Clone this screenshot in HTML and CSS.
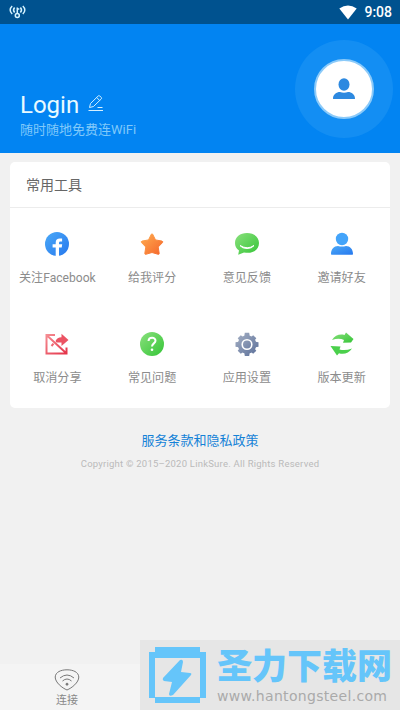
FILE: index.html
```html
<!DOCTYPE html>
<html lang="zh">
<head>
<meta charset="utf-8">
<title>WiFi</title>
<link rel="stylesheet" href="styles.css">
</head>
<body>
<div class="screen">
  <div class="status">
    <svg class="hotspot" width="17" height="14" viewBox="0 0 17 14" fill="none" stroke="#d5f3ff" stroke-width="1.500"><path d="M3.200 1C.5 3.500.5 6.500 3.200 9M5.600 2.500C4.300 4 4.300 6 5.600 7.500M13.800 1c2.700 2.500 2.700 5.500 0 8M11.400 2.500c1.300 1.500 1.300 3.500 0 5M8.300 2.500v6M8.300 4h2"/><circle cx="8.300" cy="10.500" r="2"/></svg>
    <svg class="signal" width="18" height="15" viewBox="0 0 18 15"><path d="M.3 3.600Q9-2.800 17.700 3.600L9 14.400Z" fill="#fff"/></svg>
    <span class="time">9:08</span>
  </div>
  <header class="hero">
    <div class="who">
      <div class="name"><span>Login</span>
        <svg width="16" height="17" viewBox="0 0 16 17" fill="none" stroke="#d5f0ff" stroke-width="1"><path d="M1.500 12.500l1-4L10.300.900q.7-.6 1.400 0l1.600 1.600q.6.700 0 1.400L5.500 11.500zM8.700 2.500l3 3M9.500 12.500h5M.5 15.500h14.500"/></svg>
      </div>
      <div class="tag">随时随地免费连WiFi</div>
    </div>
    <div class="halo"><div class="avatar">
      <svg width="24" height="22" viewBox="0 0 24 22" fill="#2d89e0"><ellipse cx="12" cy="6.500" rx="5.500" ry="6.200"/><path d="M1 20.500c0-4 3.500-6.500 7-6.500q4 1.300 8 0c3.500 0 7 2.500 7 6.500q0 .5-.6.500H1.600q-.6 0-.6-.5z"/></svg>
    </div></div>
  </header>
  <main class="card">
    <h2>常用工具</h2>
    <div class="grid">
      <div class="item"><svg viewBox="0 0 24 24"><defs><linearGradient id="b" x2="1" y2="1"><stop stop-color="#4ba9f7"/><stop offset="1" stop-color="#2678ee"/></linearGradient><linearGradient id="o" x2="1" y2="1"><stop stop-color="#ffae50"/><stop offset="1" stop-color="#f5652b"/></linearGradient><linearGradient id="g" x2="1" y2="1"><stop stop-color="#8ae07d"/><stop offset="1" stop-color="#35c537"/></linearGradient><linearGradient id="r" x2="1" y2="1"><stop stop-color="#f58c92"/><stop offset="1" stop-color="#e43349"/></linearGradient><linearGradient id="s" x2="1" y2="1"><stop stop-color="#a5b0c4"/><stop offset="1" stop-color="#5b6f99"/></linearGradient></defs><circle cx="12" cy="12" r="12" fill="url(#b)"/><path d="M10.700 24v-8.500H7.600v-3.200h3.100v-1.600c0-2.900 1.500-4.200 4.100-4.200h2.300v2.900h-1.600c-1.100 0-1.500.6-1.500 1.600v1.300h3.200l-.5 3.200H14V24z" fill="#fff"/></svg><span>关注Facebook</span></div>
      <div class="item"><svg viewBox="0 0 24 24"><path d="M12 1.800q.5 0 .8.700l2.700 5.400 6.500 1.200q1.300.5.500 1.500L18.200 15l1 6.500q0 1-1 .8L12 20.500l-6.200 1.800q-1 .2-1-.8l1-6.500-4.300-4.400q-.8-1 .5-1.500l6.500-1.200 2.700-5.400q.3-.7.8-.7z" fill="url(#o)" stroke="url(#o)" stroke-linejoin="round"/></svg><span>给我评分</span></div>
      <div class="item"><svg viewBox="0 0 24 24"><path d="M12 1c7 0 12 4 12 10s-5 9.800-11 9.800c-1.500 0-2.500 0-4-.3L3.200 22.700l.8-4.200C1.300 16.700 0 14 0 11 0 5 5 1 12 1z" fill="url(#g)"/><path d="M5 13.500q7.500 4.500 14 0-2 3-7 3t-7-3z" fill="#fff" stroke="#fff" stroke-linejoin="round"/></svg><span>意见反馈</span></div>
      <div class="item"><svg viewBox="0 0 24 24"><ellipse cx="12" cy="7" rx="6.200" ry="6.200" fill="#43a4fa"/><path d="M1 22c0-5 3-8 7-8q4 1.200 8 0c4 0 7 3 7 8q0 .7-.7.700H1.700Q1 22.700 1 22z" fill="url(#b)"/></svg><span>邀请好友</span></div>
      <div class="item"><svg viewBox="0 0 24 24"><path d="M10 3H1.500v18.500h20V15.500M2 3.500l19 17.500M6.500 14l2-2.300" fill="none" stroke="url(#r)" stroke-width="2"/><path d="M10.500 9q1.500-3.500 6-3.800V1.800L23.500 8l-7 6v-3.500q-3-.2-5 0z" fill="#eb5363"/></svg><span>取消分享</span></div>
      <div class="item"><svg viewBox="0 0 24 24"><circle cx="12" cy="12" r="12" fill="url(#g)"/><path d="M8.500 9c.2-4.300 7-4.300 7-.3 0 2.600-3.500 2.800-3.500 5.800" fill="none" stroke="#fff" stroke-width="2"/><circle cx="12" cy="17.700" r="1.300" fill="#fff"/></svg><span>常见问题</span></div>
      <div class="item"><svg viewBox="0 0 24 24"><g fill="url(#s)"><circle cx="12" cy="12.500" r="9.300"/><path d="M9.800.8h4.400l.8 5H9zM9.800 24h4.400l.8-5H9zM.5 10.300v4.400l5 .8v-6zM23.500 10.300v4.400l-5 .8v-6zM2.700 6.300l3.100-3.100 4 3-4.100 4.100zM21.300 18.700l-3.100 3.100-4-3 4.100-4.100zM18.200 3.200l3.100 3.100-3 4-4.100-4.100zM5.800 21.800l-3.100-3.100 3-4 4.100 4.100z"/></g><circle cx="12" cy="12.500" r="4.800" fill="none" stroke="#fff" stroke-width="1.600"/></svg><span>应用设置</span></div>
      <div class="item"><svg viewBox="0 0 24 24"><path d="M2 8C5 3 10 1.700 14.500 3L16 .5 23.500 7 21 10.500l-8 .2 1-2.700Q9 5.500 2 8z" fill="url(#g)"/><path d="M22 16.500c-3 4.500-8 6.300-13 4.700l-2 2.300L.5 14l10 .5-1 3q6 1.500 12.500-1z" fill="#4bd04c"/></svg><span>版本更新</span></div>
    </div>
  </main>
  <div class="terms">服务条款和隐私政策</div>
  <div class="copy">Copyright © 2015–2020 LinkSure. All Rights Reserved</div>
  <nav class="tabs">
    <div class="tab"><svg width="26" height="22" viewBox="0 0 26 22" fill="none" stroke="#777" stroke-width="1"><path d="M13 .8C7 .8 1.500 3 1.200 8c0 5.500 7 11 11.800 13 4.800-2 11.800-7.500 11.800-13C24.500 3 19 .8 13 .8z"/><path d="M6 9q7-6 14 0M8.500 12q4.500-4 9 0"/><circle cx="13" cy="15.200" r="1" fill="#777"/></svg><span>连接</span></div>
  </nav>
  <div class="mark">
    <svg class="bolt" width="57" height="58" viewBox="0 0 57 58" fill="#65c5fa"><path fill-rule="evenodd" d="M6 1h45v5h6v46h-6v5H6v-5H0V6h6zM6 12v39h45V12z"/><path d="M31 14q3-1 3 2l-2 10 9 1q2 0 1 2L24 49q-4 2-4-1l3-12-8-1q-2-1-1-3z"/></svg>
    <div class="words"><div class="site">圣力下载网</div><div class="url">www.hantongsteel.com</div></div>
  </div>
</div>
</body>
</html>
```
FILE: styles.css
```css
body { margin: 0; font-family: Roboto, "Noto Sans CJK SC", sans-serif; }
.screen { position: relative; width: 400px; height: 710px; overflow: hidden; background: #f1f1f1; display: flex; flex-direction: column; }
.status { height: 24px; background: #00528f; display: flex; align-items: center; box-sizing: border-box; padding: 0 8px 0 9px; color: #fff; }
.signal { margin-left: auto; margin-right: 7px; }
.time { font-size: 14px; font-weight: 500; line-height: 24px; }
.hero { height: 129px; background: #0284f2; display: flex; justify-content: space-between; box-sizing: border-box; padding: 16px 7px 0 20px; }
.who { padding-top: 51px; }
.name { display: flex; align-items: center; gap: 9px; color: #e8faff; font-size: 24px; line-height: 28px; }
.name svg { margin-top: -4px; }
.tag { color: #80c9fa; font-size: 13px; line-height: 18px; margin-top: 2px; }
.halo { width: 98px; height: 98px; border-radius: 50%; background: #138ef3; display: flex; align-items: center; justify-content: center; }
.avatar { width: 56px; height: 56px; border: 2px solid #8bcaf9; border-radius: 50%; background: #fff; display: flex; align-items: center; justify-content: center; }
.card { height: 246px; margin: 9px 10px 0; border-radius: 5px; background: #fff; }
h2 { margin: 0; height: 45px; line-height: 46px; padding-left: 16px; border-bottom: 1px solid #ececec; font-size: 14px; font-weight: 400; color: #666; }
.grid { display: grid; grid-template-columns: repeat(4, 1fr); grid-auto-rows: 100px; margin-right: 1px; padding-top: 24px; }
.item { display: flex; flex-direction: column; align-items: center; gap: 13px; font-size: 12.100px; line-height: 18px; color: #8c8c8c; white-space: nowrap; }
.item svg { width: 24px; height: 24px; }
.terms { margin-top: 23px; text-align: center; font-size: 13px; line-height: 20px; color: #1582d7; }
.copy { margin-top: 5px; text-align: center; font-size: 9.500px; letter-spacing: 0.230px; line-height: 16px; color: #bababa; white-space: nowrap; }
.tabs { margin-top: auto; height: 46px; background: #f4f4f4; display: flex; }
.tab { width: 134px; padding-top: 5px; box-sizing: border-box; display: flex; flex-direction: column; align-items: center; gap: 1px; font-size: 11px; line-height: 18px; color: #888; }
.mark { position: absolute; left: 140px; top: 640px; width: 260px; height: 70px; box-sizing: border-box; padding: 6px 0 0 9px; background: #e6e6e6; display: flex; gap: 11px; }
.site { font-family: "Noto Sans CJK SC", sans-serif; font-weight: 900; font-size: 35px; line-height: 36px; color: #65c5fa; white-space: nowrap; }
.url { margin-top: 5px; font-family: "DejaVu Sans", sans-serif; font-size: 14px; letter-spacing: 0.320px; line-height: 18px; color: #aaa; white-space: nowrap; }
```
